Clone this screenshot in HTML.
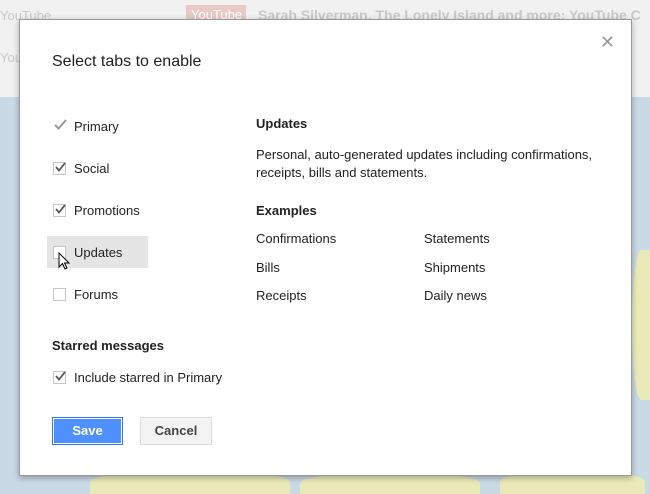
<!DOCTYPE html>
<html><head><style>
html,body{margin:0;padding:0;width:650px;height:494px;overflow:hidden}
body{font-family:"Liberation Sans",Arial,sans-serif}
.wrap{position:absolute;left:0;top:0;width:650px;height:494px;overflow:hidden;background:#c9d9e6}
.top{position:absolute;left:0;top:0;width:650px;height:97px;background:#f1f1f1}
.bg{position:absolute;color:#c8c8c8;font-size:13px}
.leaf{position:absolute;background:#e9eab8;border-radius:50% 50% 0 0}
.dlg{position:absolute;left:19px;top:19px;width:611px;height:455px;background:#fff;border:1px solid #9a9a9a;box-shadow:0 2px 6px rgba(0,0,0,.3)}
.t{position:absolute;font-size:13px;color:#222;white-space:nowrap}
.b{font-weight:bold}
.cb{position:absolute;width:11px;height:11px;border:1px solid #c6c6c6;background:#fff}
.ck{position:absolute}
</style></head><body>
<div class="wrap">
<div class="top"></div>
<div class="bg" style="left:0;top:8px">YouTube</div>
<div class="bg" style="left:0;top:50px">You</div>
<div style="position:absolute;left:186px;top:5px;width:60px;height:18px;background:#e9c9c3"></div>
<div class="bg" style="left:191px;top:7px;color:#fff">YouTube</div>
<div class="bg" style="left:258px;top:7px;font-size:14px;font-weight:bold">Sarah Silverman, The Lonely Island and more: YouTube C</div>
<div class="leaf" style="left:90px;top:470px;width:200px;height:24px"></div>
<div class="leaf" style="left:300px;top:472px;width:180px;height:22px"></div>
<div class="leaf" style="left:500px;top:470px;width:145px;height:24px"></div>
<div class="leaf" style="left:632px;top:250px;width:18px;height:150px;border-radius:50% 0 0 50%"></div>
<div class="dlg">
<div style="position:absolute;right:16px;top:12px;font-size:18px;color:#999">✕</div>
<div class="t" style="left:32px;top:33px;font-size:16px">Select tabs to enable</div>

<svg class="ck" style="left:33px;top:98px" width="15" height="14"><path d="M2 7 L5.5 10.5 L13 2" stroke="#999" stroke-width="2" fill="none"/></svg>
<div class="t" style="left:54px;top:99px">Primary</div>

<div class="cb" style="left:33px;top:142px"></div>
<svg class="ck" style="left:34px;top:140px" width="15" height="14"><path d="M2 7 L5 10.5 L11 3" stroke="#555" stroke-width="1.8" fill="none"/></svg>
<div class="t" style="left:54px;top:141px">Social</div>

<div class="cb" style="left:33px;top:184px"></div>
<svg class="ck" style="left:34px;top:182px" width="15" height="14"><path d="M2 7 L5 10.5 L11 3" stroke="#555" stroke-width="1.8" fill="none"/></svg>
<div class="t" style="left:54px;top:183px">Promotions</div>

<div style="position:absolute;left:27px;top:216px;width:101px;height:32px;background:#e5e5e5"></div>
<div class="cb" style="left:33px;top:226px"></div>
<div class="t" style="left:54px;top:225px">Updates</div>
<svg class="ck" style="left:38px;top:232px" width="14" height="20"><path d="M1 1 L1 15 L4.5 11.5 L7 17 L9 16 L6.5 11 L11 11 Z" fill="#fff" stroke="#000" stroke-width="1"/></svg>

<div class="cb" style="left:33px;top:268px"></div>
<div class="t" style="left:54px;top:267px">Forums</div>

<div class="t b" style="left:32px;top:318px">Starred messages</div>
<div class="cb" style="left:33px;top:351px"></div>
<svg class="ck" style="left:34px;top:349px" width="15" height="14"><path d="M2 7 L5 10.5 L11 3" stroke="#555" stroke-width="1.8" fill="none"/></svg>
<div class="t" style="left:54px;top:350px">Include starred in Primary</div>

<div class="t b" style="left:236px;top:96px">Updates</div>
<div class="t" style="left:236px;top:126px;line-height:18px">Personal, auto-generated updates including confirmations,<br>receipts, bills and statements.</div>
<div class="t b" style="left:236px;top:183px">Examples</div>
<div class="t" style="left:236px;top:211px">Confirmations</div>
<div class="t" style="left:404px;top:211px">Statements</div>
<div class="t" style="left:236px;top:240px">Bills</div>
<div class="t" style="left:404px;top:240px">Shipments</div>
<div class="t" style="left:236px;top:268px">Receipts</div>
<div class="t" style="left:404px;top:268px">Daily news</div>

<div style="position:absolute;left:32px;top:397px;width:69px;height:26px;background:#4d90fe;border:1px solid #3079ed;box-shadow:0 0 0 1px #fff inset;color:#fff;font-weight:bold;font-size:13px;text-align:center;line-height:26px">Save</div>
<div style="position:absolute;left:120px;top:397px;width:70px;height:26px;background:#f3f3f3;border:1px solid #dcdcdc;color:#444;font-weight:bold;font-size:13px;text-align:center;line-height:26px">Cancel</div>
</div>
</div>
</body></html>
